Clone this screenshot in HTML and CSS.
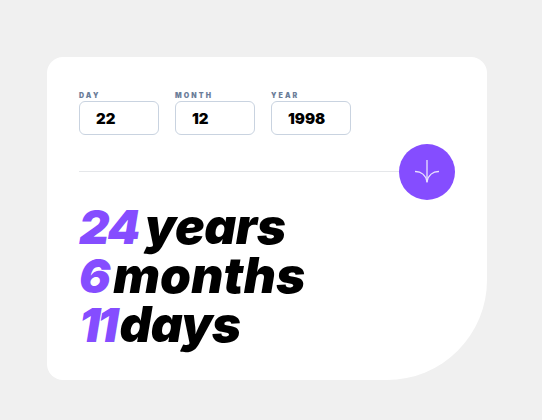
FILE: index.html
```html
<!DOCTYPE html>
<html lang="en">
<head>
<meta charset="utf-8">
<title>Age calculator</title>
<link rel="stylesheet" href="styles.css">
</head>
<body>
<main class="card">
  <form class="fields">
    <label class="field"><span class="field-label">DAY</span><input class="field-input" value="22"></label>
    <label class="field"><span class="field-label">MONTH</span><input class="field-input" value="12"></label>
    <label class="field"><span class="field-label">YEAR</span><input class="field-input" value="1998"></label>
  </form>
  <div class="divider">
    <button class="submit" type="button" aria-label="Calculate">
      <svg viewBox="0 0 24 24" width="24" height="24" fill="none" stroke="#e9e2ff" stroke-width="1.3" stroke-linecap="round"><path d="M12 0.5V22"/><path d="M0.5 11.5C6 11.5 11 15 12 22C13 15 18 11.5 23.5 11.5"/></svg>
    </button>
  </div>
  <div class="results">
    <p class="result"><span class="num">24</span><span class="unit">years</span></p>
    <p class="result"><span class="num num-tight">6</span><span class="unit unit-months">months</span></p>
    <p class="result"><span class="num num-ones">11</span><span class="unit unit-days">days</span></p>
  </div>
</main>
</body>
</html>
```
FILE: styles.css
```css
* { box-sizing: border-box; }
html, body { height: 100%; }
body {
  margin: 0;
  background: #f0f0f0;
  font-family: "Inter", "Liberation Sans", sans-serif;
  overflow: hidden;
}
.card {
  width: 440px;
  height: 323px;
  margin: 57px 0 0 47px;
  padding: 33px 32px 0;
  background: #fff;
  border-radius: 16px 16px 100px 16px;
}
.fields { display: flex; gap: 16px; }
.field { display: flex; flex-direction: column; width: 80px; }
.field-label {
  font-size: 7px;
  line-height: 11px;
  font-weight: 900;
  letter-spacing: 2.1px;
  color: #6b7d99;
}
.field-input {
  width: 80px;
  height: 34px;
  padding: 0 0 0 16px;
  border: 1px solid #c9d3e0;
  border-radius: 6px;
  background: #fff;
  color: #000;
  font: 900 15px "Inter", "Liberation Sans", sans-serif;
  outline: none;
}
.divider {
  display: flex;
  justify-content: flex-end;
  align-items: center;
  height: 1px;
  margin-top: 36px;
  background: #e5e7ea;
}
.submit {
  display: flex;
  align-items: center;
  justify-content: center;
  width: 56px;
  height: 56px;
  padding: 0;
  flex: none;
  border: 0;
  border-radius: 50%;
  background: #854dff;
}
.results { margin-top: 30px; }
.result {
  margin: 0;
  font-size: 47px;
  line-height: 48px;
  font-weight: 900;
  font-style: italic;
  color: #000;
}
.num { color: #854dff; margin-right: 6px; letter-spacing: -1.5px; }
.num-tight { margin-right: 4px; }
.num-ones { margin-right: 4px; letter-spacing: -3px; }
.unit { font-size: 49.5px; letter-spacing: -0.4px; }
.unit-months { letter-spacing: 0.2px; }
.unit-days { letter-spacing: -0.6px; }
```
